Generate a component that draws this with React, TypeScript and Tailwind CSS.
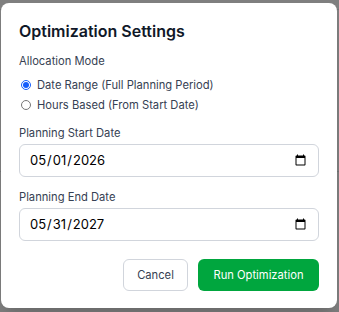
import { useState } from "react";

const rows = [
  { pct: "70%", hrs: "5.00", ok: "Yes" },
  { pct: "", hrs: "", ok: "" },
  { pct: "", hrs: "", ok: "" },
];

function BackgroundTable() {
  return (
    <div className="absolute inset-0 bg-white">
      {rows.map((r, i) => (
        <div
          key={i}
          className={`grid grid-cols-[95px_100px_103px_40px] items-center border-b border-gray-200 text-[11.2px] text-gray-700 ${
            i === 0 ? "-mt-[74px] h-[84px]" : "h-[162px]"
          }`}
        >
          <span />
          <span>{r.pct}</span>
          <span>{r.hrs}</span>
          <span>
            {r.ok && (
              <span className="rounded bg-green-100 px-2 py-[2px] text-green-800">
                {r.ok}
              </span>
            )}
          </span>
        </div>
      ))}
    </div>
  );
}

export default function App() {
  const [mode, setMode] = useState("range");

  return (
    <div
      className="relative h-[312px] w-[339px] overflow-hidden"
      style={{ fontFamily: "Inter, 'Noto Sans', sans-serif" }}
    >
      <BackgroundTable />
      <div className="absolute inset-0 bg-black/50">
        <div className="ml-[1px] mt-[3px] w-[336px] rounded-lg bg-white px-[18px] pt-[18px] pb-[17px] shadow-xl">
          <h2 className="text-[16px] font-semibold leading-5 text-gray-900">
            Optimization Settings
          </h2>

          <p className="mt-[12px] text-[11.2px] leading-4 text-gray-700">Allocation Mode</p>
          <div className="mt-[6px]">
            <label className="flex h-5 items-center gap-[6px] pl-[2px] text-[11.2px] text-gray-700">
              <input
                type="radio"
                name="mode"
                checked={mode === "range"}
                onChange={() => setMode("range")}
                className="m-0 h-[10px] w-[10px] accent-blue-600"
              />
              Date Range (Full Planning Period)
            </label>
            <label className="flex h-5 items-center gap-[6px] pl-[2px] text-[11.2px] text-gray-700">
              <input
                type="radio"
                name="mode"
                checked={mode === "hours"}
                onChange={() => setMode("hours")}
                className="m-0 h-[10px] w-[10px] accent-blue-600"
              />
              Hours Based (From Start Date)
            </label>
          </div>

          <label className="mt-[10px] block text-[11.2px] leading-4 text-gray-700">
            Planning Start Date
          </label>
          <input
            type="date"
            defaultValue="2026-05-01"
            className="mt-[3px] block h-[33px] w-full rounded-md border border-gray-300 px-[9px] text-[13px] text-black"
          />

          <label className="mt-[12px] block text-[11.2px] leading-4 text-gray-700">
            Planning End Date
          </label>
          <input
            type="date"
            defaultValue="2027-05-31"
            className="mt-[3px] block h-[33px] w-full rounded-md border border-gray-300 px-[9px] text-[13px] text-black"
          />

          <div className="mt-[18px] flex justify-end gap-[10px]">
            <button className="h-8 w-[65px] rounded-md border border-gray-300 bg-white text-[11.2px] text-gray-700">
              Cancel
            </button>
            <button className="h-8 w-[121px] rounded-md bg-green-600 text-[11.2px] text-white">
              Run Optimization
            </button>
          </div>
        </div>
      </div>
    </div>
  );
}
